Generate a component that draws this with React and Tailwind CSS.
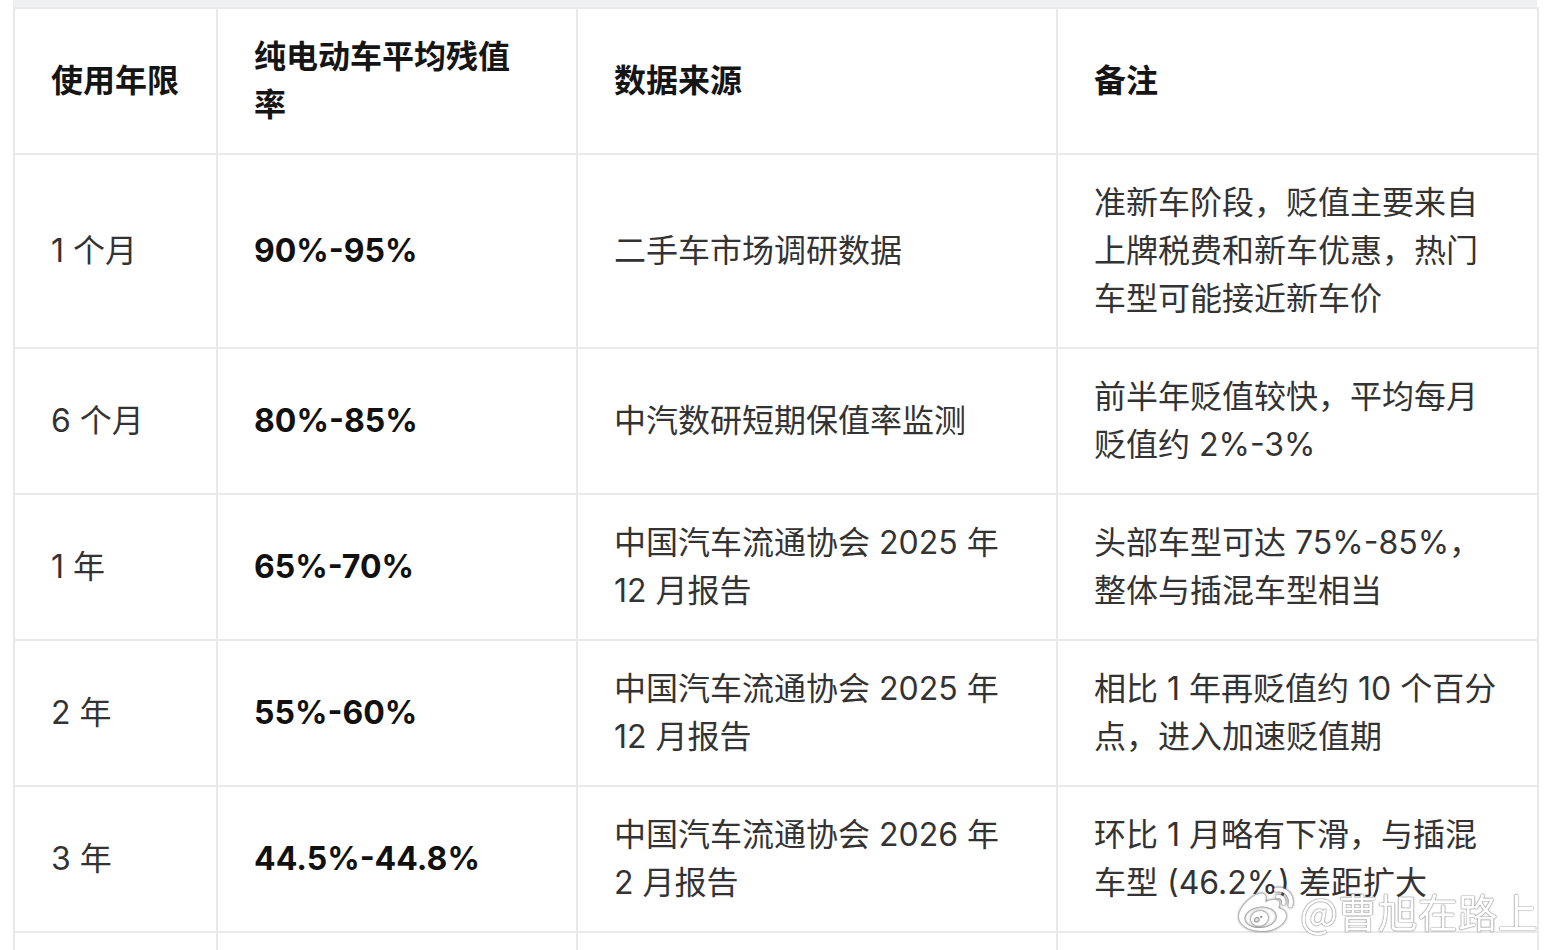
import React from "react";
import { FaWeibo } from "react-icons/fa";

const rows = [
  {
    a: "1 个月",
    b: "90%-95%",
    c: "二手车市场调研数据",
    d: "准新车阶段，贬值主要来自上牌税费和新车优惠，热门车型可能接近新车价",
  },
  {
    a: "6 个月",
    b: "80%-85%",
    c: "中汽数研短期保值率监测",
    d: "前半年贬值较快，平均每月贬值约 2%-3%",
  },
  {
    a: "1 年",
    b: "65%-70%",
    c: "中国汽车流通协会 2025 年 12 月报告",
    d: "头部车型可达 75%-85%，整体与插混车型相当",
  },
  {
    a: "2 年",
    b: "55%-60%",
    c: "中国汽车流通协会 2025 年 12 月报告",
    d: "相比 1 年再贬值约 10 个百分点，进入加速贬值期",
  },
  {
    a: "3 年",
    b: "44.5%-44.8%",
    c: "中国汽车流通协会 2026 年 2 月报告",
    d: "环比 1 月略有下滑，与插混车型 (46.2%) 差距扩大",
  },
];

const cell =
  "border-2 border-[#e9e9ea] px-9 py-6 align-middle text-left";

export default function App() {
  return (
    <div
      className="relative w-[1552px] h-[950px] overflow-hidden bg-white text-[32px] leading-[48px] text-[#333333]"
      style={{ fontFamily: '"Inter", "Noto Sans CJK SC", sans-serif' }}
    >
      <div className="ml-[13px] w-[1524px] h-[7px] bg-[#eff0f2]" />
      <table className="ml-[13px] w-[1524px] table-fixed border-collapse">
        <colgroup>
          <col className="w-[203px]" />
          <col className="w-[360px]" />
          <col className="w-[480px]" />
          <col className="w-[481px]" />
        </colgroup>
        <thead>
          <tr className="font-bold text-[#151515]">
            <th className={cell}>使用年限</th>
            <th className={cell}>纯电动车平均残值率</th>
            <th className={cell}>数据来源</th>
            <th className={cell}>备注</th>
          </tr>
        </thead>
        <tbody>
          {rows.map((r, i) => (
            <tr key={i}>
              <td className={cell}>{r.a}</td>
              <td className={cell + " font-bold text-[#111111]"}>{r.b}</td>
              <td className={cell}>{r.c}</td>
              <td className={cell}>{r.d}</td>
            </tr>
          ))}
          <tr>
            <td className={cell}>&nbsp;</td>
            <td className={cell}>&nbsp;</td>
            <td className={cell}>&nbsp;</td>
            <td className={cell}>&nbsp;</td>
          </tr>
        </tbody>
      </table>

      <div className="absolute left-[1234px] top-[884px] flex items-center gap-[2px] opacity-95">
        <FaWeibo className="w-[64px] h-[54px] text-white [filter:drop-shadow(0_0_1px_rgba(90,90,90,0.9))_drop-shadow(0_0_1px_rgba(90,90,90,0.6))]" />
        <span
          className="text-[40px] leading-[48px] text-white [text-shadow:0_0_1px_#777,0_0_1px_#777,0_0_2px_rgba(0,0,0,0.35)]"
          style={{ fontFamily: '"Noto Sans CJK SC", sans-serif' }}
        >
          @曹旭在路上
        </span>
      </div>
    </div>
  );
}
